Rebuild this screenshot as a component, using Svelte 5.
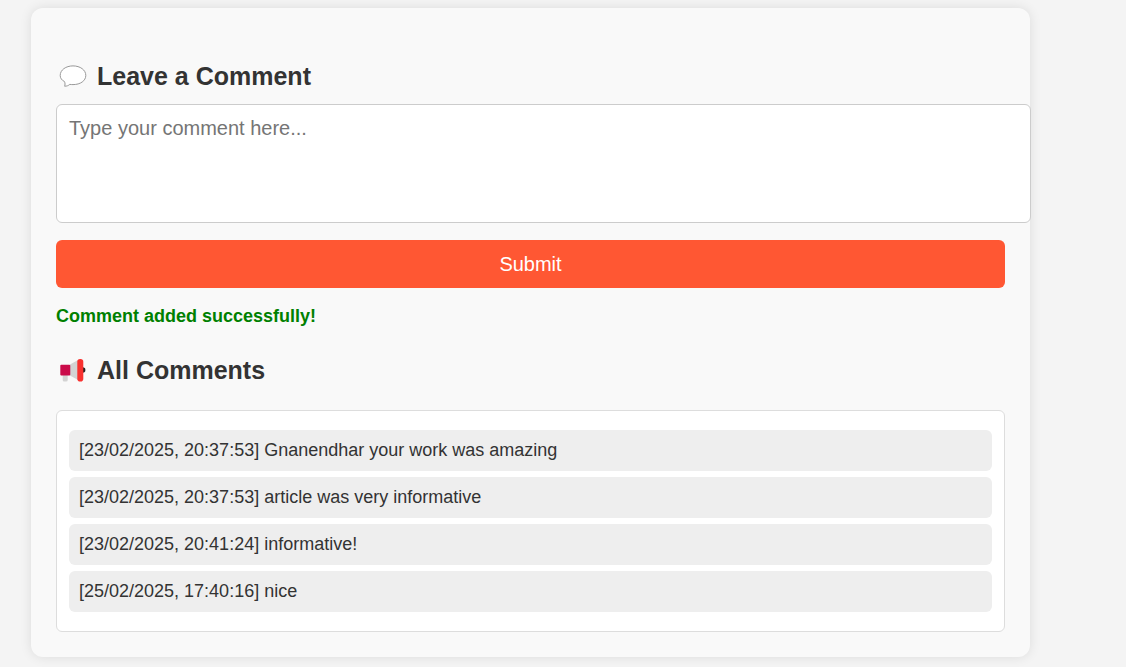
<script>
  let draft = $state('');
  let message = $state('Comment added successfully!');
  let comments = $state([
    { time: '23/02/2025, 20:37:53', text: 'Gnanendhar your work was amazing' },
    { time: '23/02/2025, 20:37:53', text: 'article was very informative' },
    { time: '23/02/2025, 20:41:24', text: 'informative!' },
    { time: '25/02/2025, 17:40:16', text: 'nice' }
  ]);

  function submit(event) {
    event.preventDefault();
    const text = draft.trim();
    if (!text) return;
    comments.push({ time: new Date().toLocaleString('en-GB'), text });
    draft = '';
    message = 'Comment added successfully!';
  }
</script>

<main class="card">
  <form onsubmit={submit}>
    <h2>
      <svg class="icon" viewBox="0 0 34 30" aria-hidden="true">
        <path
          d="M8.500 20.600C5.700 19.200 4.200 17 4.200 14.400C4.200 9 9.800 4.900 17 4.900C24.200 4.900 29.800 9 29.800 14.400C29.800 19.800 24.400 23.600 17 23.600C15.800 23.600 14.800 23.500 13.800 23.400C12.400 24.600 10.800 25.200 8.600 25.200C9.200 23.800 9.200 22.200 8.500 20.600Z"
          fill="#fff" stroke="#999" stroke-width="1" stroke-linejoin="round" />
      </svg>
      <label for="comment">Leave a Comment</label>
    </h2>
    <textarea id="comment" placeholder="Type your comment here..." bind:value={draft}></textarea>
    <button type="submit">Submit</button>
  </form>
  <p class="message" role="status">{message}</p>

  <h2>
    <svg class="icon" viewBox="0 0 34 30" aria-hidden="true">
      <path d="M6.700 19H11.700V25Q11.700 26.500 10.200 26.500H8.200Q6.700 26.500 6.700 25Z" fill="#d3d3d3" />
      <circle cx="26.700" cy="15" r="2.700" fill="#212121" />
      <path d="M14 9.500L23 4.500V25.500L14 20.500Z" fill="#d3d3d3" />
      <rect x="4.300" y="9.700" width="10" height="10.800" rx="1" fill="#ca0b4a" />
      <rect x="21.300" y="4" width="6" height="22.500" rx="2.800" fill="#f8312f" />
    </svg>
    <span>All Comments</span>
  </h2>
  <ul>
    {#each comments as comment}
      <li>[{comment.time}] {comment.text}</li>
    {/each}
  </ul>
</main>

<style>
  :global(body) {
    background: #f4f4f4;
    color: #333;
    font-family: "Liberation Sans", Arial, sans-serif;
  }

  .card {
    margin: 8px 96px 10px 31px;
    padding: 53px 25px 25px;
    border-radius: 12px;
    background: #f9f9f9;
    box-shadow: 0 0 12px rgba(0, 0, 0, 0.1);
  }

  h2 {
    display: flex;
    align-items: center;
    gap: 7px;
    margin: 0;
    font-size: 25px;
    line-height: 30px;
  }

  .icon {
    width: 34px;
    height: 30px;
  }

  textarea {
    display: block;
    box-sizing: content-box;
    width: 100%;
    height: 93px;
    margin: 13px 0 17px;
    padding: 12px;
    border: 1px solid #ccc;
    border-radius: 6px;
    background: #fff;
    color: #333;
    font-family: inherit;
    font-size: 20px;
    line-height: 23px;
    resize: none;
  }

  textarea::placeholder {
    color: #757575;
  }

  button {
    display: block;
    width: 100%;
    padding: 12px;
    border: 0;
    border-radius: 6px;
    background: #ff5733;
    color: #fff;
    font-family: inherit;
    font-size: 20px;
    line-height: 24px;
    cursor: pointer;
  }

  .message {
    margin: 18px 0 28px;
    color: green;
    font-size: 18px;
    font-weight: bold;
    line-height: 21px;
  }

  ul {
    display: flex;
    flex-direction: column;
    gap: 6px;
    margin: 25px 0 0;
    padding: 19px 12px;
    border: 1px solid #ddd;
    border-radius: 6px;
    background: #fff;
    list-style: none;
  }

  li {
    padding: 10px;
    border-radius: 6px;
    background: #eee;
    font-size: 18px;
    line-height: 21px;
  }
</style>
